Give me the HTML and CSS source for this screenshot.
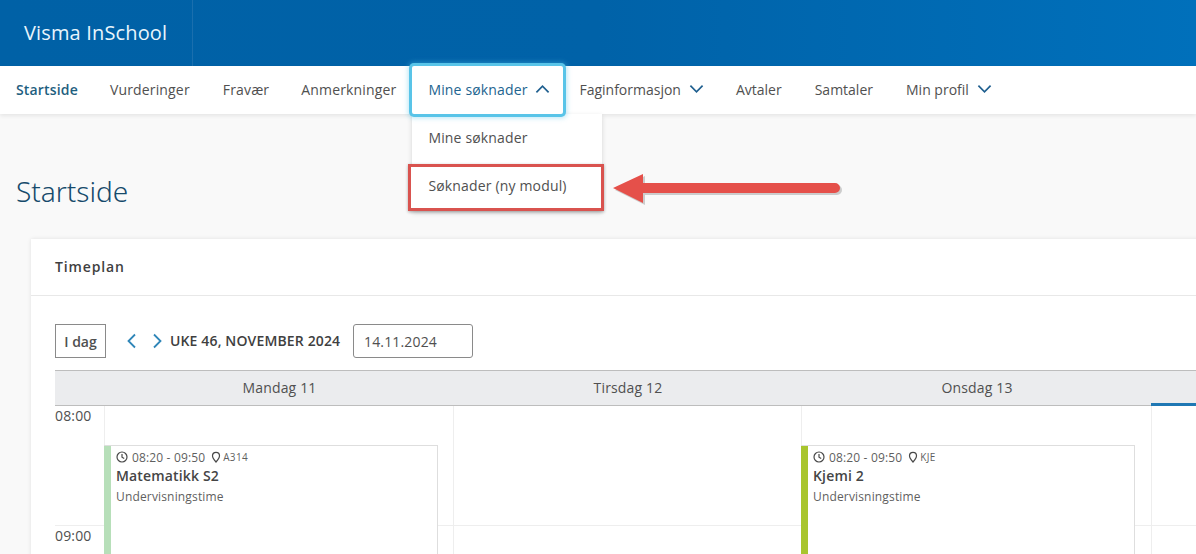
FILE: index.html
```html
<!DOCTYPE html>
<html lang="no">
<head>
<meta charset="utf-8">
<title>Visma InSchool</title>
<link rel="stylesheet" href="styles.css">
</head>
<body>
<header class="topbar">
  <div class="brand">Visma InSchool</div>
</header>
<nav class="nav">
  <a class="nav-item active">Startside</a>
  <a class="nav-item">Vurderinger</a>
  <a class="nav-item nudge">Fravær</a>
  <a class="nav-item">Anmerkninger</a>
  <div class="nav-menu">
    <a class="nav-item focused">Mine søknader
      <svg class="chev" viewBox="0 0 16 10"><path d="M1.5 8.5 8 2l6.500 6.500"/></svg>
    </a>
    <div class="dropdown">
      <a class="drop-item">Mine søknader</a>
      <a class="drop-item marked">Søknader (ny modul)</a>
    </div>
    <svg class="arrow" viewBox="0 0 235 36">
      <path class="arrow-shadow" d="M3 18 33 4V13H225a5 5 0 0 1 0 10H33V33Z"/>
      <path class="arrow-fill" d="M1 16 31 2V11H223a5 5 0 0 1 0 10H31V31Z"/>
    </svg>
  </div>
  <a class="nav-item tight">Faginformasjon
    <svg class="chev" viewBox="0 0 16 10"><path d="M1.5 1.5 8 8l6.500-6.500"/></svg>
  </a>
  <a class="nav-item tight">Avtaler</a>
  <a class="nav-item tight nudge">Samtaler</a>
  <a class="nav-item tight nudge">Min profil
    <svg class="chev" viewBox="0 0 16 10"><path d="M1.5 1.5 8 8l6.500-6.500"/></svg>
  </a>
</nav>
<main class="main">
  <h1 class="title">Startside</h1>
  <section class="card">
    <h2 class="card-title">Timeplan</h2>
    <div class="card-body">
      <div class="toolbar">
        <button class="today">I dag</button>
        <div class="pager">
          <svg class="pager-icon" viewBox="0 0 10 16"><path d="M8 1.500 1.500 8 8 14.500"/></svg>
          <svg class="pager-icon" viewBox="0 0 10 16"><path d="M2 1.500 8.500 8 2 14.500"/></svg>
        </div>
        <strong class="week">UKE 46, NOVEMBER 2024</strong>
        <div class="date">14.11.2024</div>
      </div>
      <div class="cal">
        <div class="cal-head">
          <div class="head-gutter"></div>
          <div class="head-day">Mandag 11</div>
          <div class="head-day">Tirsdag 12</div>
          <div class="head-day">Onsdag 13</div>
          <div class="head-day today-col"></div>
        </div>
        <div class="cal-body">
          <div class="hours">
            <div class="hour">08:00</div>
            <div class="hour">09:00</div>
          </div>
          <div class="day">
            <article class="event light">
              <div class="meta">
                <svg class="ico" viewBox="0 0 12 12"><circle cx="6" cy="6" r="5"/><path d="M6 3v3.200l2.200 1.400"/></svg>
                <span>08:20 - 09:50</span>
                <svg class="ico pin" viewBox="0 0 10 12"><path d="M5 11C3 8.800 1.500 7 1.500 4.800a3.500 3.500 0 0 1 7 0C8.500 7 7 8.800 5 11Z"/></svg>
                <span class="room">A314</span>
              </div>
              <div class="subject">Matematikk S2</div>
              <div class="kind">Undervisningstime</div>
            </article>
          </div>
          <div class="day"></div>
          <div class="day">
            <article class="event lime">
              <div class="meta">
                <svg class="ico" viewBox="0 0 12 12"><circle cx="6" cy="6" r="5"/><path d="M6 3v3.200l2.200 1.400"/></svg>
                <span>08:20 - 09:50</span>
                <svg class="ico pin" viewBox="0 0 10 12"><path d="M5 11C3 8.800 1.500 7 1.500 4.800a3.500 3.500 0 0 1 7 0C8.500 7 7 8.800 5 11Z"/></svg>
                <span class="room">KJE</span>
              </div>
              <div class="subject">Kjemi 2</div>
              <div class="kind">Undervisningstime</div>
            </article>
          </div>
          <div class="day"></div>
        </div>
      </div>
    </div>
  </section>
</main>
</body>
</html>
```

FILE: styles.css
```css
* { box-sizing: border-box; }
html, body { margin: 0; height: 100%; overflow: hidden; }
body {
  width: 1196px;
  height: 554px;
  background: #f9f9f9;
  color: #505050;
  font-family: "Open Sans", "Noto Sans", sans-serif;
  font-size: 14px;
  letter-spacing: .16px;
}
.topbar {
  height: 66px;
  background: linear-gradient(90deg, #0061a6 0%, #0062a8 50%, #0070bb 100%);
  display: flex;
}
.brand {
  width: 193px;
  padding-left: 24px;
  border-right: 1px solid #1a6fae;
  color: #e8f5fc;
  font-size: 20px;
  line-height: 65px;
  letter-spacing: .15px;
}
.nav {
  height: 48px;
  background: #fff;
  display: flex;
  align-items: center;
  box-shadow: 0 2px 4px rgba(0, 0, 0, .08);
  position: relative;
  z-index: 2;
}
.nav-item {
  display: flex;
  align-items: center;
  gap: 8px;
  height: 48px;
  padding: 0 16px 2px;
  white-space: nowrap;
  color: #505050;
}
.nav-item.active { color: #1f5f7f; font-weight: 600; }
.nudge { margin-left: 1px; }
.tight { letter-spacing: 0; }
.nav-menu { position: relative; }
.nav-item.focused {
  color: #22648f;
  width: 151px;
  gap: 7px;
  padding-right: 0;
  background: #fff;
  border-radius: 2px;
  position: relative;
  z-index: 3;
  box-shadow: 0 0 0 3px #59c4e8, 0 0 5px 4px rgba(79, 192, 230, .4);
}
.chev { width: 15px; height: 10px; flex: none; }
.chev path { fill: none; stroke: #1f5f8f; stroke-width: 1.8; }
.dropdown {
  position: absolute;
  left: 0;
  top: 48px;
  width: 190px;
  background: #fff;
  box-shadow: 0 2px 5px rgba(0, 0, 0, .15);
}
.drop-item {
  display: block;
  height: 48px;
  padding: 0 16px;
  line-height: 48px;
  white-space: nowrap;
}
.drop-item.marked {
  height: 47px;
  margin: 2px 0 0 -4px;
  width: 196px;
  padding-left: 17px;
  line-height: 38px;
  border: 3px solid #d9534f;
  box-shadow: 0 1px 3px rgba(0, 0, 0, .3);
  background: #fff;
}
.arrow {
  position: absolute;
  left: 200px;
  top: 106px;
  width: 235px;
  height: 36px;
}
.arrow-shadow { fill: rgba(0, 0, 0, .18); }
.arrow-fill { fill: #e5504a; }
.main { height: 440px; padding-left: 16px; overflow: hidden; }
.title {
  margin: 0;
  padding-top: 59px;
  height: 125px;
  font-family: "Noto Sans", sans-serif;
  font-weight: 300;
  font-size: 28px;
  line-height: 36px;
  letter-spacing: 0;
  color: #164a6b;
}
.card {
  margin-left: 15px;
  margin-right: -16px;
  height: 320px;
  background: #fff;
  box-shadow: 0 0 4px rgba(0, 0, 0, .1);
  overflow: hidden;
}
.card-title {
  margin: 0;
  height: 57px;
  padding-left: 24px;
  border-bottom: 1px solid #e8e8e8;
  font-size: 14px;
  font-weight: 600;
  line-height: 56px;
  letter-spacing: .85px;
  color: #3f3f3f;
}
.card-body { padding: 28px 0 0 24px; }
.toolbar { display: flex; align-items: center; height: 34px; }
.today {
  width: 51px;
  height: 34px;
  padding: 0;
  border: 1px solid #8a8a8a;
  background: #fff;
  color: #505050;
  font: 600 14px "Open Sans", sans-serif;
}
.pager { display: flex; gap: 15px; margin: 0 8px 0 21px; }
.pager-icon { width: 10px; height: 16px; }
.pager-icon path { fill: none; stroke: #2f86b8; stroke-width: 1.8; }
.week {
  width: 183px;
  padding-bottom: 2px;
  font-size: 14px;
  font-weight: 600;
  letter-spacing: .14px;
  color: #3f3f3f;
  white-space: nowrap;
}
.date {
  width: 120px;
  height: 34px;
  padding-left: 10px;
  border: 1px solid #8a8a8a;
  border-radius: 3px;
  line-height: 33px;
}
.cal { margin-top: 12px; }
.cal-head {
  display: grid;
  grid-template-columns: 49px 349px 348px 350px 1fr;
  height: 36px;
  background: #ebecee;
  border-top: 1px solid #bdbdbd;
  border-bottom: 1px solid #bdbdbd;
}
.head-day { padding-left: 2px; text-align: center; line-height: 33px; }
.today-col { border-bottom: 3px solid #1f78b4; height: 35px; }
.cal-body {
  display: grid;
  grid-template-columns: 49px 349px 348px 350px 1fr;
  height: 200px;
  background: linear-gradient(#eee, #eee) 0 119px / 100% 1px no-repeat;
}
.hour { height: 120px; line-height: 20px; }
.day { border-left: 1px solid #eee; padding-top: 39px; }
.event {
  width: 334px;
  height: 160px;
  margin-left: -1px;
  padding: 3px 0 0 12px;
  background: #fff;
  border: 1px solid #dedede;
  border-left-width: 0;
}
.event.light { box-shadow: inset 7px 0 0 #b7dfb9; }
.event.lime { box-shadow: inset 7px 0 0 #a8c52e; }
.meta { display: flex; align-items: center; height: 16px; font-size: 12px; color: #5f5f5f; letter-spacing: .15px; }
.ico { width: 12px; height: 12px; flex: none; margin-right: 4px; }
.ico circle, .ico path { fill: none; stroke: #494949; stroke-width: 1.2; }
.ico.pin { width: 10px; margin-left: 6px; margin-right: 2px; }
.room { font-size: 10px; letter-spacing: .3px; }
.subject { margin-top: 1px; font-size: 14px; font-weight: 600; line-height: 20px; color: #454545; }
.kind { margin-top: 2px; font-size: 12px; line-height: 18px; color: #5f5f5f; }
```
